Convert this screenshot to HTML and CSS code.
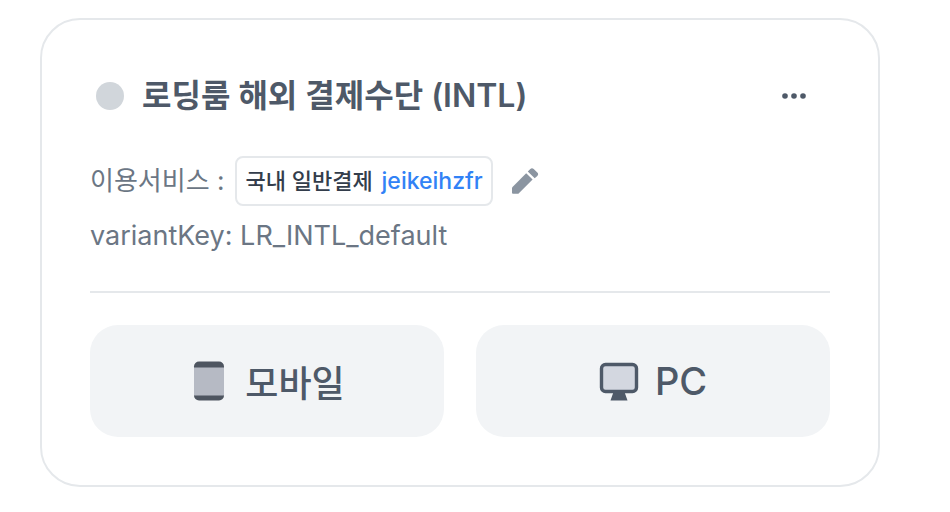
FILE: index.html
```html
<!DOCTYPE html>
<html lang="ko">
<head>
  <meta charset="UTF-8">
  <meta name="viewport" content="width=device-width, initial-scale=1.0">
  <title>로딩룸 해외 결제수단 (INTL)</title>
  <link rel="stylesheet" href="styles.css">
</head>
<body>
  <article class="card">
    <header class="card-header">
      <span class="status-dot"></span>
      <h2 class="card-title">로딩룸 해외 결제수단 (INTL)</h2>
      <button type="button" class="icon-btn more-btn" aria-label="더보기">
        <svg width="28" height="28" viewBox="0 0 28 28" fill="currentColor">
          <circle cx="5" cy="14" r="2.8"/>
          <circle cx="14" cy="14" r="2.8"/>
          <circle cx="23" cy="14" r="2.8"/>
        </svg>
      </button>
    </header>

    <div class="info-row">
      <span>이용서비스 :</span>
      <span class="service-tag">국내 일반결제 <span class="service-id">jeikeihzfr</span></span>
      <button type="button" class="icon-btn edit-btn" aria-label="수정">
        <svg width="28" height="28" viewBox="0 0 28 28" fill="currentColor">
          <path d="M1 20.4 15.2 6.2l6.4 6.4L7.4 26.8H2a1 1 0 0 1-1-1z"/>
          <path d="M16.8 4.6 19.3 2a2.4 2.4 0 0 1 3.4 0l3.6 3.6a2.4 2.4 0 0 1 0 3.4l-2.6 2.2z"/>
        </svg>
      </button>
    </div>
    <p class="variant-key">variantKey: LR_INTL_default</p>

    <div class="preview-buttons">
      <button type="button" class="preview-btn">
        <svg width="40" height="40" viewBox="0 0 40 40">
          <rect x="5" y="0.5" width="30" height="39" rx="5" fill="#4e5560"/>
          <rect x="5" y="6.5" width="30" height="28" fill="#b6bac4"/>
        </svg>
        모바일
      </button>
      <button type="button" class="preview-btn preview-btn-pc">
        <svg width="40" height="40" viewBox="0 0 40 40">
          <rect x="2.5" y="3.5" width="35" height="27" rx="4" fill="#d3d7e0" stroke="#4e5968" stroke-width="3.4"/>
          <path d="M14.5 31h11l3 8.5h-17z" fill="#4e5968"/>
        </svg>
        PC
      </button>
    </div>
  </article>
</body>
</html>
```
FILE: styles.css
```css
:root {
  --text-strong: #4e5968;
  --text-dark: #333d4b;
  --text-muted: #6b7684;
  --line: #e5e8eb;
  --blue: #3182f6;
}
* {
  box-sizing: border-box;
}
body {
  margin: 0;
  padding: 18px 70px 25px 40px;
  background-color: #fff;
  color: var(--text-muted);
  font-family: Inter, "Noto Sans CJK KR", sans-serif;
}
button {
  border: none;
  font-family: inherit;
  cursor: pointer;
}
svg {
  display: block;
  flex-shrink: 0;
}
.card {
  padding: 48px;
  border: 2px solid var(--line);
  border-radius: 40px;
}
.card-header {
  display: flex;
  align-items: center;
  height: 56px;
  padding-left: 6px;
  margin-bottom: 32px;
}
.status-dot {
  width: 28px;
  height: 28px;
  margin-right: 18px;
  border-radius: 50%;
  background-color: #d1d6db;
}
.card-title {
  margin: 0;
  color: var(--text-strong);
  font-size: 32px;
  line-height: 48px;
  font-weight: 600;
}
.icon-btn {
  display: flex;
  align-items: center;
  justify-content: center;
  padding: 0;
  background: none;
}
.more-btn {
  width: 72px;
  height: 56px;
  margin-left: auto;
  color: var(--text-strong);
}
.info-row {
  display: flex;
  align-items: center;
  font-size: 26px;
  line-height: 40px;
}
.service-tag {
  margin-left: 11px;
  padding: 7px 8px;
  border: 2px solid var(--line);
  border-radius: 8px;
  color: var(--text-dark);
  font-size: 22px;
  line-height: 32px;
  font-weight: 500;
}
.service-id {
  margin-left: 3px;
  color: var(--blue);
  font-size: 23px;
}
.edit-btn {
  margin-left: 18px;
  color: #8b95a1;
}
.variant-key {
  margin: 10px 0 0;
  padding-bottom: 35px;
  border-bottom: 2px solid var(--line);
  font-size: 27px;
  line-height: 40px;
}
.preview-buttons {
  display: grid;
  grid-template-columns: 1fr 1fr;
  gap: 32px;
  margin-top: 32px;
}
.preview-btn {
  display: flex;
  align-items: center;
  justify-content: center;
  gap: 16px;
  height: 112px;
  border-radius: 28px;
  background-color: #f2f4f6;
  color: var(--text-strong);
  font-size: 36px;
  font-weight: 500;
}
.preview-btn-pc {
  font-size: 38px;
}
```
